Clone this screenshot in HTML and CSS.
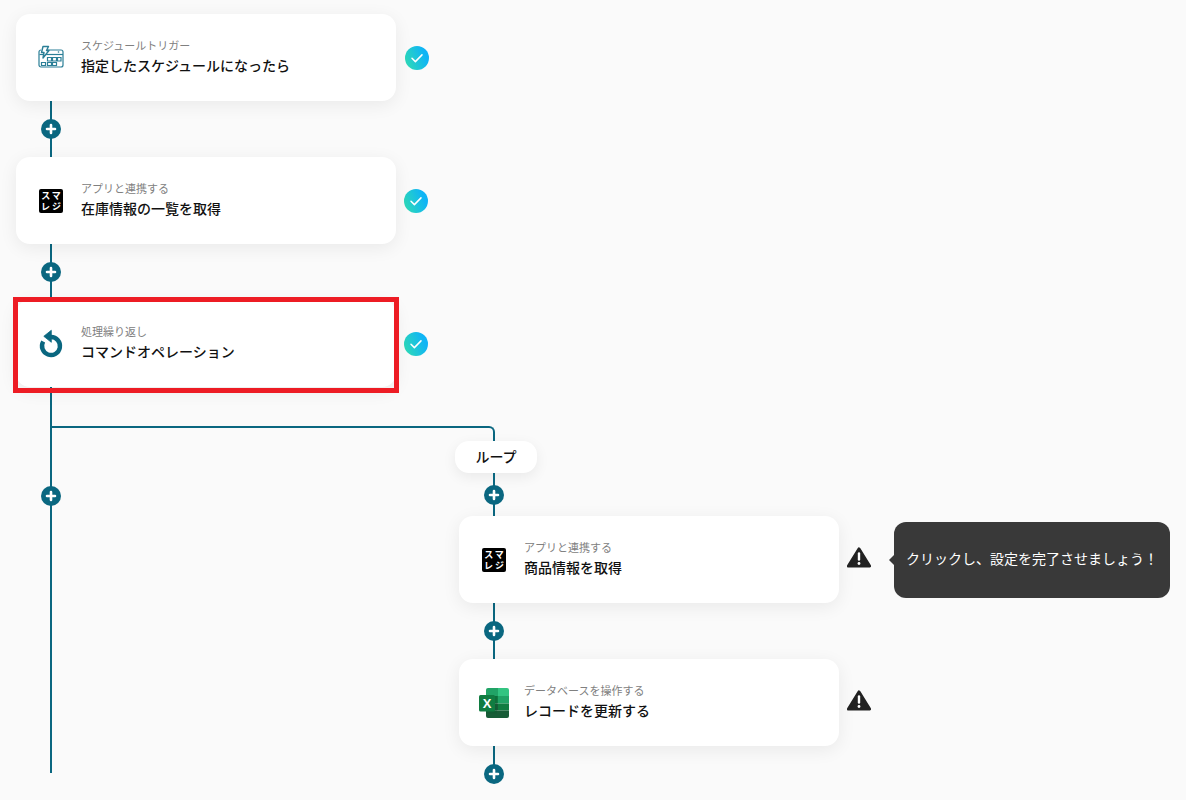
FILE: index.html
```html
<!DOCTYPE html>
<html lang="ja">
<head>
<meta charset="utf-8">
<title>フロー</title>
<link rel="stylesheet" href="styles.css">
</head>
<body>
<svg class="defs" width="0" height="0" aria-hidden="true">
  <symbol id="plus" viewBox="0 0 20 20">
    <circle cx="10" cy="10" r="10" fill="#0a6780"/>
    <path d="M10 6v8M6 10h8" stroke="#fff" stroke-width="2.6" stroke-linecap="round"/>
  </symbol>
  <symbol id="check" viewBox="0 0 24 24">
    <defs>
      <linearGradient id="checkGrad" x1="0" y1="0.8" x2="1" y2="0.4">
        <stop offset="0.12" stop-color="#2bd6bd"/>
        <stop offset="0.88" stop-color="#0fb4f6"/>
      </linearGradient>
    </defs>
    <circle cx="12" cy="12" r="12" fill="url(#checkGrad)"/>
    <path d="M7 12.300l3.400 3.300L17 8.900" fill="none" stroke="#fff" stroke-width="1.500" stroke-linecap="round" stroke-linejoin="round"/>
  </symbol>
  <symbol id="warn" viewBox="0 0 24 21">
    <path d="M12 2L22.500 19H1.500Z" fill="#222" stroke="#222" stroke-width="3.200" stroke-linejoin="round"/>
    <path d="M12 6.500v6" stroke="#fff" stroke-width="2.400" stroke-linecap="round"/>
    <circle cx="12" cy="16.500" r="1.400" fill="#fff"/>
  </symbol>
</svg>

<main class="flow">
  <section class="row">
    <article class="card">
      <svg class="card-icon" viewBox="0 0 30 30" fill="none" stroke="#2b7f97" stroke-width="1.200">
        <path d="M10 7H25a2 2 0 0 1 2 2V22a2 2 0 0 1-2 2H5a2 2 0 0 1-2-2V9a2 2 0 0 1 2-2"/>
        <path d="M3.500 11.500H27"/>
        <circle cx="22.500" cy="9" r=".8" fill="#2b7f97" stroke="none"/>
        <path d="M11.500 14.500h4v3.500h-4zM16.500 14.500h4v3.500h-4zM21.500 14.500h3.500v3.500h-3.500zM5.500 19.500h4v3h-4zM11.500 19.500h4v3h-4zM16.500 19.500h4v3h-4z"/>
        <path d="M7 3.500h5.500l-2 4h2.500L7 15l1-5.500H5.500Z" fill="#fff" stroke-width="1.400" stroke-linejoin="round"/>
      </svg>
      <div class="card-text">
        <p class="card-label">スケジュールトリガー</p>
        <p class="card-title">指定したスケジュールになったら</p>
      </div>
    </article>
    <svg class="status status-first"><use href="#check"/></svg>
  </section>

  <div class="connector"><svg class="plus"><use href="#plus"/></svg></div>

  <section class="row">
    <article class="card">
      <div class="card-icon"><div class="smaregi"><span>スマ</span><span>レジ</span></div></div>
      <div class="card-text">
        <p class="card-label">アプリと連携する</p>
        <p class="card-title">在庫情報の一覧を取得</p>
      </div>
    </article>
    <svg class="status"><use href="#check"/></svg>
  </section>

  <div class="connector"><svg class="plus"><use href="#plus"/></svg></div>

  <section class="row">
    <article class="card">
      <svg class="card-icon" viewBox="0 0 30 30" fill="none">
        <path d="M15 8A9 9 0 1 1 7.200 12.500" stroke="#0a6780" stroke-width="4.400"/>
        <path d="M15.300 1.300V13.300L7.800 7.300Z" fill="#0a6780" stroke="#0a6780" stroke-width=".8" stroke-linejoin="round"/>
      </svg>
      <div class="card-text">
        <p class="card-label">処理繰り返し</p>
        <p class="card-title">コマンドオペレーション</p>
      </div>
      <div class="highlight"></div>
    </article>
    <svg class="status"><use href="#check"/></svg>
  </section>

  <div class="branch">
    <div class="trunk"><svg class="plus trunk-plus"><use href="#plus"/></svg></div>
    <div class="branch-main">
      <div class="arm"></div>
      <div class="loop-col">
        <div class="loop-label">ループ</div>
        <div class="connector connector-loop"><svg class="plus"><use href="#plus"/></svg></div>

        <section class="row row-inner">
          <article class="card">
            <div class="card-icon"><div class="smaregi"><span>スマ</span><span>レジ</span></div></div>
            <div class="card-text">
              <p class="card-label">アプリと連携する</p>
              <p class="card-title">商品情報を取得</p>
            </div>
          </article>
          <svg class="warning"><use href="#warn"/></svg>
          <div class="tooltip">クリックし、設定を完了させましょう！</div>
        </section>

        <div class="connector connector-inner"><svg class="plus"><use href="#plus"/></svg></div>

        <section class="row row-inner">
          <article class="card">
            <svg class="card-icon" viewBox="0 0 30 30">
              <path d="M9 0H19V8H7V2a2 2 0 0 1 2-2Z" fill="#21a366"/>
              <path d="M19 0H28a2 2 0 0 1 2 2V8H19Z" fill="#33c481"/>
              <rect x="7" y="8" width="12" height="7.500" fill="#107c41"/>
              <rect x="19" y="8" width="11" height="7.500" fill="#21a366"/>
              <rect x="7" y="15.500" width="12" height="7" fill="#185c37"/>
              <rect x="19" y="15.500" width="11" height="7" fill="#107c41"/>
              <path d="M7 22.500H30V28a2 2 0 0 1-2 2H9a2 2 0 0 1-2-2Z" fill="#185c37"/>
              <rect x="7" y="8" width="11" height="17.500" fill="#0b5a30" opacity=".35"/>
              <rect x="0" y="7" width="16" height="16.500" rx="1.500" fill="#107c41"/>
              <text class="excel-x" x="8" y="20" text-anchor="middle">X</text>
            </svg>
            <div class="card-text">
              <p class="card-label">データベースを操作する</p>
              <p class="card-title">レコードを更新する</p>
            </div>
          </article>
          <svg class="warning"><use href="#warn"/></svg>
        </section>

        <div class="connector connector-last"><svg class="plus"><use href="#plus"/></svg></div>
      </div>
    </div>
  </div>
</main>
</body>
</html>
```

FILE: styles.css
```css
* {
  box-sizing: border-box;
}

html,
body {
  margin: 0;
  height: 800px;
  overflow: hidden;
  background: #fafafa;
}

body {
  font-family: "Noto Sans CJK JP", "Noto Sans", sans-serif;
  color: #1c1c1c;
}

.defs {
  display: block;
  height: 0;
}

.flow {
  padding: 14px 0 0 16px;
}

.row {
  display: flex;
  align-items: flex-start;
}

.card {
  position: relative;
  flex: none;
  display: flex;
  width: 380px;
  height: 87px;
  padding-left: 20px;
  background: #fff;
  border-radius: 14px;
  box-shadow: 0 4px 18px rgba(0, 0, 0, 0.07);
}

.card-icon {
  flex: none;
  display: block;
  width: 30px;
  height: 30px;
  margin-top: 29px;
  margin-right: 15px;
}

.card-text {
  padding-top: 23px;
}

.card-label {
  margin: 0;
  font-size: 11px;
  line-height: 16px;
  color: #808080;
}

.card-title {
  margin: 2px 0 0;
  font-size: 14px;
  font-weight: 500;
  line-height: 20px;
  color: #111;
}

.smaregi {
  display: flex;
  flex-direction: column;
  align-items: center;
  justify-content: center;
  width: 24px;
  height: 24px;
  margin: 3px;
  background: #000;
  border-radius: 2px;
  color: #fff;
  font-size: 9px;
  font-weight: 700;
  line-height: 11px;
  letter-spacing: 2px;
  text-indent: 2px;
}

.excel-x {
  font-family: "Liberation Sans", sans-serif;
  font-size: 13px;
  font-weight: 700;
  fill: #fff;
}

.highlight {
  position: absolute;
  top: -3px;
  right: -3px;
  bottom: -6px;
  left: -3px;
  border: 5px solid #ed1c24;
}

.status {
  flex: none;
  width: 24px;
  height: 24px;
  margin-top: 32px;
  margin-left: 8px;
}

.status-first {
  margin-left: 9px;
}

.connector {
  display: flex;
  align-items: center;
  justify-content: center;
  width: 2px;
  height: 56px;
  margin-left: 34px;
  background: #0a6780;
}

.plus {
  flex: none;
  display: block;
  width: 20px;
  height: 20px;
}

.branch {
  display: flex;
  margin-left: 34px;
}

.trunk {
  flex: none;
  display: flex;
  flex-direction: column;
  align-items: center;
  width: 2px;
  height: 386px;
  padding-top: 99px;
  background: #0a6780;
}

.branch-main {
  flex: none;
  width: 443px;
  padding-top: 39px;
}

.arm {
  height: 15px;
  border-top: 2px solid #0a6780;
  border-right: 2px solid #0a6780;
  border-top-right-radius: 6px;
}

.loop-col {
  margin-left: 403px;
}

.loop-label {
  width: 82px;
  height: 32px;
  background: #fff;
  border-radius: 14px;
  box-shadow: 0 4px 14px rgba(0, 0, 0, 0.07);
  font-size: 14px;
  font-weight: 500;
  line-height: 30px;
  text-align: center;
  color: #111;
}

.connector-loop {
  height: 43px;
  margin-left: 38px;
}

.connector-inner {
  margin-left: 38px;
}

.connector-last {
  height: 28px;
  margin-left: 38px;
  align-items: flex-end;
}

.connector-last .plus {
  margin-bottom: -10px;
}

.row-inner {
  margin-left: 4px;
}

.warning {
  flex: none;
  width: 24px;
  height: 21px;
  margin-top: 31px;
  margin-left: 8px;
}

.tooltip {
  position: relative;
  flex: none;
  width: 276px;
  height: 76px;
  margin-top: 6px;
  margin-left: 23px;
  padding-left: 12px;
  background: #393939;
  border-radius: 12px;
  color: #fff;
  font-size: 14px;
  line-height: 73px;
  white-space: nowrap;
}

.tooltip::before {
  content: "";
  position: absolute;
  top: 33px;
  left: -5px;
  border-top: 5px solid transparent;
  border-bottom: 5px solid transparent;
  border-right: 5px solid #393939;
}
```
